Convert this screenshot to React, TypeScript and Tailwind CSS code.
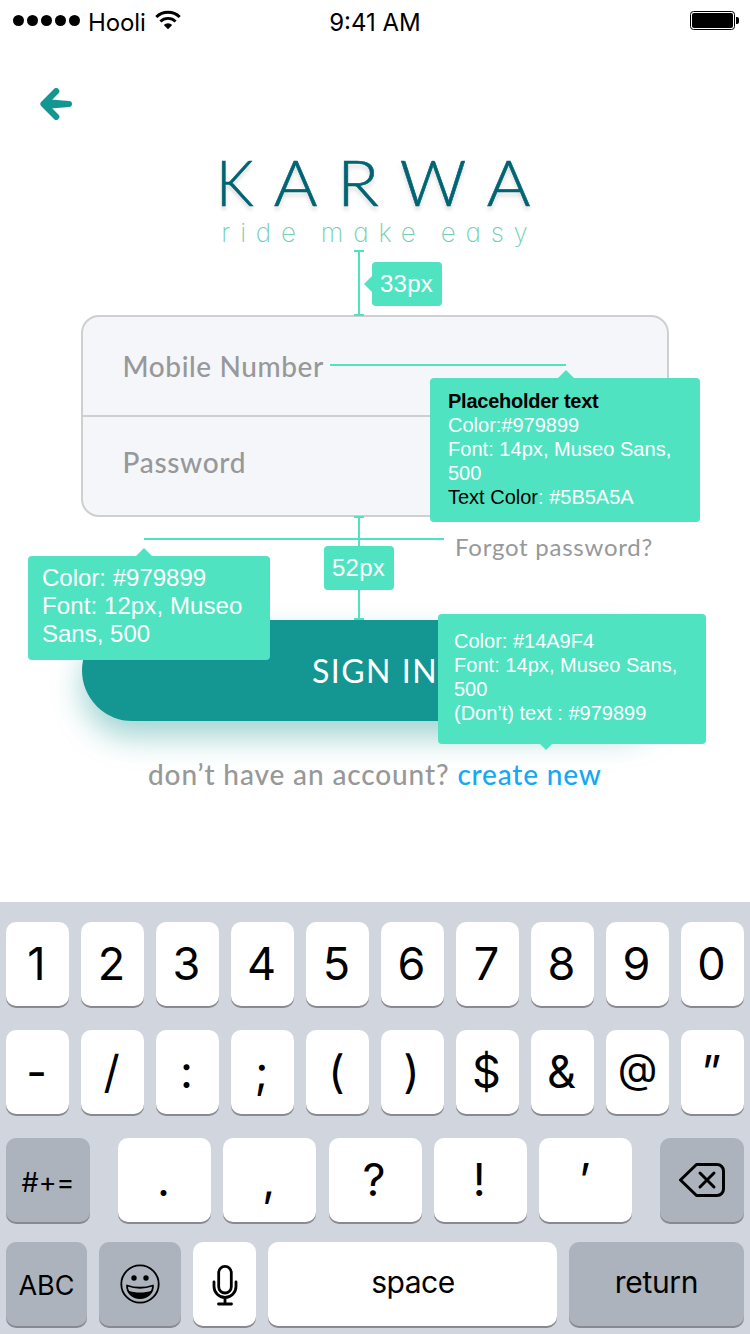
import React from "react";

const MUSEO = "font-['Lato','Noto_Sans',sans-serif]";
const SYSTEM = "font-['Inter','Roboto',sans-serif]";
const HELV = "font-['Liberation_Sans',Arial,sans-serif]";

function StatusBar() {
  return (
    <header className={`${SYSTEM} grid h-10 grid-cols-3 items-start text-2xl leading-[46px] text-black`}>
      <div className="flex pl-[13px]">
        <div className="flex gap-[3px] pt-[15px]">
          {[0, 1, 2, 3, 4].map((i) => (
            <span key={i} className="size-[11px] rounded-full bg-black" />
          ))}
        </div>
        <span className="ml-[8px] tracking-[-0.1px]">Hooli</span>
        <svg className="ml-[9px] mt-[10px]" width="27" height="20" viewBox="0 0 27 20" fill="none" stroke="#000">
          <path d="M1.3 7a17 17 0 0 1 23.4 0" strokeWidth="3" />
          <path d="M5.4 11.5a11 11 0 0 1 15.2 0" strokeWidth="2.8" />
          <path d="M13 19.2l-4.2-4.3a6 6 0 0 1 8.400 0z" fill="#000" stroke="none" />
        </svg>
      </div>
      <span className="text-center">9:41 AM</span>
      <div className="flex justify-end pr-[11px] pt-[11px]">
        <div className="h-[19px] w-[45px] rounded-[3.5px] border border-black p-px">
          <div className="h-full w-full rounded-[2px] bg-black" />
        </div>
        <div className="ml-px mt-[6px] h-[7px] w-[3px] rounded-r-[2px] bg-black" />
      </div>
    </header>
  );
}

function Logo() {
  return (
    <div className="flex flex-col items-center">
      <h1 className={`${MUSEO} mr-[5px] flex h-[61px] w-[313px] justify-between text-[63px] font-light leading-[57px] text-[#006472] [-webkit-text-stroke:0.6px_#006472] [text-shadow:0_4px_4px_rgba(0,0,0,0.16)]`}>
        <span className="-mr-[4px] origin-left scale-x-94">K</span>
        <span className="scale-x-106">A</span>
        <span className="scale-x-110">R</span>
        <span className="scale-x-104">W</span>
        <span className="scale-x-106">A</span>
      </h1>
      <p className={`${SYSTEM} h-[37px] whitespace-nowrap pl-[9px] text-[26px] font-extralight leading-[38px] tracking-[9.800px] text-[#74cfb3] [font-feature-settings:'cv11'] [word-spacing:-2px]`}>
        ride make easy
      </p>
    </div>
  );
}

type KeyProps = { children: React.ReactNode; className?: string; dark?: boolean };

function Key({ children, className = "", dark = false }: KeyProps) {
  return (
    <button
      className={`flex h-[84px] items-center justify-center rounded-[10px] shadow-[0_2px_0_#898a8f] ${dark ? "bg-[#acb3bd]" : "bg-white"} ${className}`}
    >
      {children}
    </button>
  );
}

function Keyboard() {
  return (
    <section className={`${SYSTEM} mt-auto flex h-[432px] flex-col bg-[#d1d5dd] px-[6px] pt-5 text-[45px] leading-[54px] text-black`}>
      <div className="flex gap-3">
        {["1", "2", "3", "4", "5", "6", "7", "8", "9", "0"].map((k) => (
          <Key key={k} className="w-[63px] pr-[2px]">{k}</Key>
        ))}
      </div>
      <div className="mt-6 flex gap-3">
        {["-", "/", ":", ";", "(", ")", "$", "&"].map((k) => (
          <Key key={k} className="w-[63px] pr-[2px]">{k}</Key>
        ))}
        <Key className="w-[63px] pb-[8px] text-[41px]">@</Key>
        <Key className="w-[63px] pr-[2px]">”</Key>
      </div>
      <div className="mt-6 flex justify-between">
        <Key dark className="w-[84px] text-[27px]">
          <span className="pt-[6px]">#+=</span>
        </Key>
        <div className="flex w-[514px] justify-between">
          {[".", ",", "?", "!", "’"].map((k) => (
            <Key key={k} className="w-[93px] pr-[2px]">{k}</Key>
          ))}
        </div>
        <Key dark className="w-[84px]">
          <svg width="46" height="34" viewBox="0 0 46 34" fill="none" stroke="#000" strokeWidth="3" strokeLinejoin="round" strokeLinecap="round">
            <path d="M17.5 1.5H38a6.5 6.5 0 0 1 6.500 6.500v18a6.500 6.500 0 0 1-6.500 6.500H17.500L1.500 17z" />
            <path d="M21 10l14 14M35 10L21 24" />
          </svg>
        </Key>
      </div>
      <div className="mt-5 flex gap-3">
        <Key dark className="w-[81px] text-[27px]">
          <span className="pt-[4px]">ABC</span>
        </Key>
        <Key dark className="w-[82px]">
          <svg width="40" height="40" viewBox="0 0 40 40">
            <circle cx="20" cy="20" r="18.700" fill="none" stroke="#000" strokeWidth="1.800" />
            <circle cx="14" cy="14" r="2.700" />
            <circle cx="26" cy="14" r="2.700" />
            <path d="M7 21.500c8 2.800 18 2.800 26 0c0 7.500-5.500 12.500-13 12.500S7 29 7 21.500z" fill="none" stroke="#000" strokeWidth="1.800" strokeLinejoin="round" />
            <path d="M8 26.500c7 2.700 17 2.700 24 0c-1.500 4.500-6 7.500-12 7.500s-10.500-3-12-7.500z" />
          </svg>
        </Key>
        <Key className="w-[63px]">
          <svg className="mt-px" width="26" height="42" viewBox="0 0 26 42" fill="none" stroke="#000" strokeWidth="2.800" strokeLinecap="round">
            <rect x="6.700" y="2.400" width="12.600" height="26.600" rx="6.300" />
            <path d="M2 18v4.500a11 11 0 0 0 22 0V18M13 34v6M6.500 40h13" />
          </svg>
        </Key>
        <Key className="w-[289px] text-[30px]">
          <span className="pb-[4px] pl-px tracking-[-0.5px]">space</span>
        </Key>
        <Key dark className="w-[175px] text-[30px]">
          <span className="pb-[4px] tracking-[-0.3px]">return</span>
        </Key>
      </div>
    </section>
  );
}

function Annotations() {
  return (
    <aside className={`${HELV} pointer-events-none absolute inset-0 text-white`}>
      {/* spacing rule: logo to form */}
      <div className="absolute left-[354px] top-[250px] flex h-[66px] w-[10px] flex-col items-center justify-between border-y-2 border-[#50e3c2]">
        <span className="w-[2px] grow bg-[#50e3c2]" />
      </div>
      <div className="absolute left-[372px] top-[262px] h-[44px] w-[70px] rounded bg-[#50e3c2] pr-px text-center text-2xl leading-[43px] tracking-[0.3px]">
        33px
        <svg className="absolute -left-2 top-[14px]" width="9" height="16" viewBox="0 0 9 16">
          <path d="M0 8L8 0h1v16H8z" fill="#50e3c2" />
        </svg>
      </div>

      {/* placeholder spec */}
      <div className="absolute left-[330px] top-[364px] h-[2px] w-[236px] bg-[#50e3c2]" />
      <div className="absolute left-[430px] top-[378px] h-[144px] w-[270px] rounded bg-[#50e3c2] pl-[18px] pt-[11px] text-xl leading-6">
        <svg className="absolute -top-2 left-[128px]" width="16" height="9" viewBox="0 0 16 9">
          <path d="M8 0l8 8v1H0V8z" fill="#50e3c2" />
        </svg>
        <p className="font-bold tracking-[-0.25px] text-black">Placeholder text</p>
        <p>Color:#979899</p>
        <p className="tracking-[0.04px]">Font: 14px, Museo Sans,</p>
        <p>500</p>
        <p><span className="text-black">Text Color</span>: #5B5A5A</p>
      </div>

      {/* spacing rule: form to button */}
      <div className="absolute left-[354px] top-[516px] flex h-[104px] w-[10px] flex-col items-center border-y-2 border-[#50e3c2]">
        <span className="w-[2px] grow bg-[#50e3c2]" />
      </div>
      <div className="absolute left-[144px] top-[538px] h-[2px] w-[300px] bg-[#50e3c2]" />
      <div className="absolute left-[324px] top-[546px] h-[44px] w-[70px] rounded bg-[#50e3c2] pr-px text-center text-2xl leading-[43px] tracking-[0.3px]">52px</div>

      {/* forgot password spec */}
      <div className="absolute left-[28px] top-[556px] h-[104px] w-[242px] rounded bg-[#50e3c2] pl-[14px] pt-[8px] text-2xl leading-7 tracking-[0.1px]">
        <svg className="absolute -top-2 left-[108px]" width="16" height="9" viewBox="0 0 16 9">
          <path d="M8 0l8 8v1H0V8z" fill="#50e3c2" />
        </svg>
        <p className="tracking-normal">Color: #979899</p>
        <p>Font: 12px, Museo</p>
        <p className="tracking-normal">Sans, 500</p>
      </div>

      {/* create account spec */}
      <div className="absolute left-[438px] top-[614px] h-[130px] w-[268px] rounded bg-[#50e3c2] pl-[16px] pt-[15px] text-xl leading-6">
        <p>Color: #14A9F4</p>
        <p className="tracking-[0.04px]">Font: 14px, Museo Sans,</p>
        <p>500</p>
        <p>(Don’t) text : #979899</p>
        <svg className="absolute -bottom-[6px] left-[102px]" width="12" height="7" viewBox="0 0 12 7">
          <path d="M0 0h12v1L6 7 0 1z" fill="#50e3c2" />
        </svg>
      </div>
    </aside>
  );
}

export default function App() {
  return (
    <div className="relative flex h-[1334px] w-[750px] flex-col overflow-hidden bg-white">
      <StatusBar />
      <div className="h-[113px] pl-10 pt-12">
        <svg width="32" height="32" viewBox="0 0 32 32" fill="none" stroke="#149792" strokeLinecap="round" strokeLinejoin="round">
          <path d="M16.200 3.200L3.500 16l12.700 12.800" strokeWidth="6.200" />
          <path d="M5 11L29 13a3 3 0 0 1 0 6L5 21z" fill="#149792" stroke="none" />
        </svg>
      </div>
      <Logo />
      <main className={`${MUSEO} mx-[81px] mt-[64px] flex flex-col text-[28px] text-[#979899]`}>
        <div className="h-[202px] rounded-[18px] border-2 border-[#cecfd1] bg-[#f4f6f9]">
          <div className="flex h-[100px] items-center border-b-2 border-[#cecfd1] pl-[39.5px] font-medium leading-[98px] tracking-[0.6px]">Mobile Number</div>
          <div className="flex h-[90px] items-center pl-[39.5px] font-medium tracking-[0.7px]">Password</div>
        </div>
        <a className="mr-[16px] mt-[14px] h-8 self-end text-[24px] leading-8 tracking-[0.75px]">Forgot password?</a>
        <button className="mx-px mt-[57px] h-[101px] rounded-full bg-[#149792] text-[32px] tracking-[1.500px] text-white shadow-[0_16px_30px_rgba(20,151,146,0.4)]">
          SIGN IN
        </button>
        <p className="mt-[33px] h-10 whitespace-nowrap pl-[67px] font-medium leading-10 tracking-[0.870px]">
          don’t have an account? <a className="tracking-[0.8px] text-[#14a9f4]">create new</a>
        </p>
      </main>
      <Keyboard />
      <Annotations />
    </div>
  );
}
